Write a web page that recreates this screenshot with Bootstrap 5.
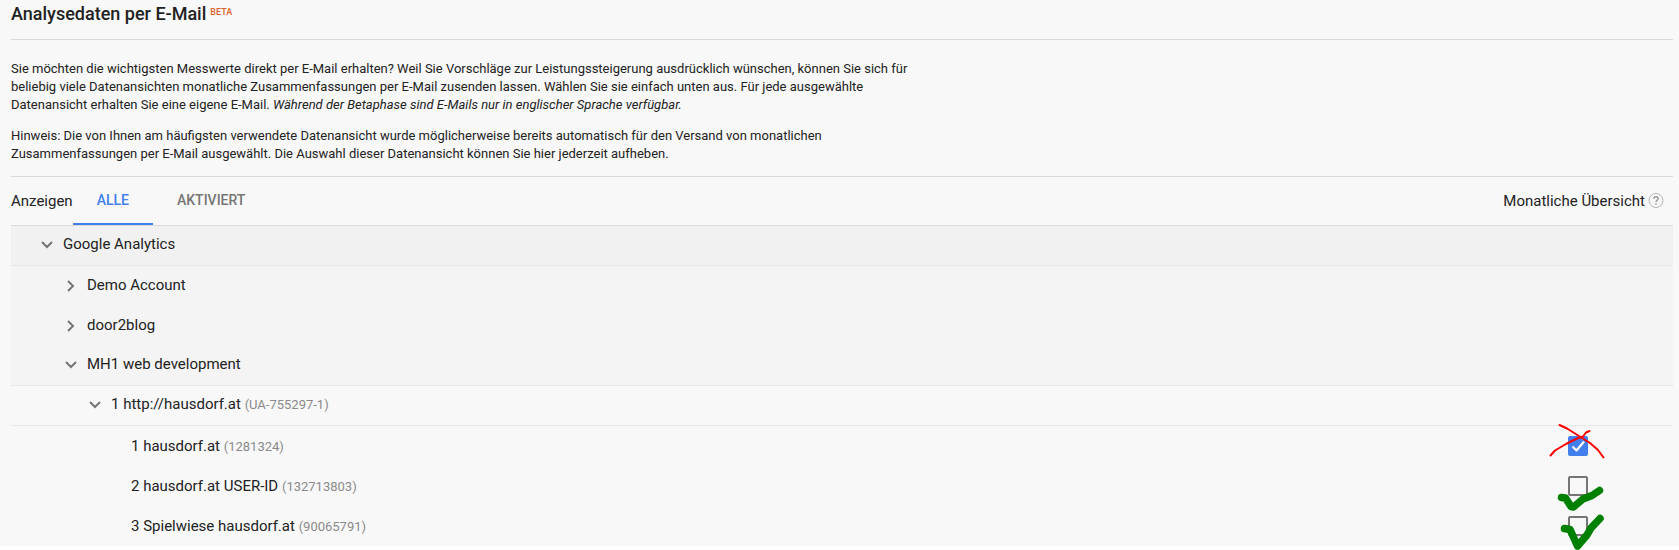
<!DOCTYPE html>
<html lang="de">
<head>
<meta charset="utf-8">
<meta name="viewport" content="width=device-width, initial-scale=1">
<title>Analysedaten per E-Mail</title>
<link href="https://cdn.jsdelivr.net/npm/bootstrap@5.3.0/dist/css/bootstrap.min.css" rel="stylesheet">
<style>
  body { background: #fff; color: #222; font: 15px/20px Roboto, sans-serif; min-height: 100vh; }
  .page { background: #f8f8f8; padding: 0 6px 0 11px; }
  .rule { border-bottom: 1px solid #dadada; }
  .page-title { font-size: 18px; line-height: 28px; font-weight: 500; padding-bottom: 11px; }
  .beta { font-size: 9px; line-height: 12px; font-weight: 500; color: #d9622b; margin-top: 6px; }
  .intro { font-size: 13px; line-height: 18px; padding: 20px 0 13px; }
  .intro p { max-width: 910px; margin-bottom: 13px; }
  .intro p:last-child { margin-bottom: 0; }
  .filter-bar { height: 49px; }
  .tab-btn { border: 0; border-bottom: 2px solid transparent; background: none; padding: 0 24px; color: #757575; font-size: 14px; font-weight: 500; }
  .tab-btn.active { color: #427fed; border-color: #427fed; }
  .tree-row { height: 40px; padding-right: 85px; }
  .tree-group { padding-bottom: 3px; }
  .tree-row.lined { border-bottom: 1px solid #e8e8e8; }
  .bg-root { background: #f1f1f1; }
  .bg-account { background: #f4f4f4; }
  .lvl-0 { padding-left: 30px; }
  .lvl-1 { padding-left: 54px; }
  .lvl-2 { padding-left: 78px; }
  .lvl-3 { padding-left: 120px; }
  .toggle { border: 0; background: none; padding: 0; width: 12px; height: 12px; margin-right: 10px; }
  .entry-id { font-size: 13px; color: #8a8a8a; }
  .help { border: 0; background: none; padding: 0; margin: 0 9px 0 3px; }
  .form-check-input.pick { width: 20px; height: 20px; margin: 0; border: 2px solid #757575; border-radius: 2px; background-color: transparent; }
  .form-check-input.pick:checked { background-color: #427fed; border-color: #427fed; background-image: none; }
  .ink { position: absolute; left: -23px; top: -16px; pointer-events: none; }
</style>
</head>
<body>
<main class="page">
  <header class="rule d-flex align-items-start gap-1">
    <h1 class="page-title m-0">Analysedaten per E-Mail</h1>
    <span class="beta">BETA</span>
  </header>

  <section class="intro rule">
    <p>Sie möchten die wichtigsten Messwerte direkt per E-Mail erhalten? Weil Sie Vorschläge zur Leistungssteigerung ausdrücklich wünschen, können Sie sich für beliebig viele Datenansichten monatliche Zusammenfassungen per E-Mail zusenden lassen. Wählen Sie sie einfach unten aus. Für jede ausgewählte Datenansicht erhalten Sie eine eigene E-Mail. <em>Während der Betaphase sind E-Mails nur in englischer Sprache verfügbar.</em></p>
    <p>Hinweis: Die von Ihnen am häufigsten verwendete Datenansicht wurde möglicherweise bereits automatisch für den Versand von monatlichen Zusammenfassungen per E-Mail ausgewählt. Die Auswahl dieser Datenansicht können Sie hier jederzeit aufheben.</p>
  </section>

  <div class="filter-bar rule d-flex">
    <span class="align-self-center">Anzeigen</span>
    <div class="d-flex" role="tablist">
      <button type="button" class="tab-btn active" role="tab" aria-selected="true">ALLE</button>
      <button type="button" class="tab-btn" role="tab" aria-selected="false">AKTIVIERT</button>
    </div>
    <span class="align-self-center ms-auto">Monatliche Übersicht</span>
    <button type="button" class="help align-self-center d-flex" aria-label="Hilfe">
      <svg width="16" height="16" viewBox="0 0 16 16" fill="none" stroke="#b5b5b5"><circle cx="8" cy="7.500" r="7"/><path d="M5.800 5.800C5.900 3.100 10.200 3.200 10.200 5.700C10.200 7.200 8 7.300 8 9.100M8 10.300V11.700" stroke="#999" stroke-width="1.400"/></svg>
    </button>
  </div>

  <div class="tree-row tree-group lined bg-root lvl-0 d-flex align-items-center">
    <button type="button" class="toggle d-flex" aria-label="Einklappen"><svg width="12" height="12" viewBox="0 0 12 12" fill="none" stroke="#757575" stroke-width="2"><path d="M1 4L6 9L11 4"/></svg></button>
    <span>Google Analytics</span>
  </div>
  <div class="tree-row tree-group bg-account lvl-1 d-flex align-items-center">
    <button type="button" class="toggle d-flex" aria-label="Ausklappen"><svg width="12" height="12" viewBox="0 0 12 12" fill="none" stroke="#757575" stroke-width="2" overflow="visible"><path d="M3 2L8 7L3 12"/></svg></button>
    <span>Demo Account</span>
  </div>
  <div class="tree-row tree-group bg-account lvl-1 d-flex align-items-center">
    <button type="button" class="toggle d-flex" aria-label="Ausklappen"><svg width="12" height="12" viewBox="0 0 12 12" fill="none" stroke="#757575" stroke-width="2" overflow="visible"><path d="M3 2L8 7L3 12"/></svg></button>
    <span>door2blog</span>
  </div>
  <div class="tree-row tree-group lined bg-account lvl-1 d-flex align-items-center">
    <button type="button" class="toggle d-flex" aria-label="Einklappen"><svg width="12" height="12" viewBox="0 0 12 12" fill="none" stroke="#757575" stroke-width="2"><path d="M1 4L6 9L11 4"/></svg></button>
    <span>MH1 web development</span>
  </div>
  <div class="tree-row tree-group lined lvl-2 d-flex align-items-center">
    <button type="button" class="toggle d-flex" aria-label="Einklappen"><svg width="12" height="12" viewBox="0 0 12 12" fill="none" stroke="#757575" stroke-width="2"><path d="M1 4L6 9L11 4"/></svg></button>
    <span>1 http://hausdorf.at <span class="entry-id">(UA-755297-1)</span></span>
  </div>

  <div class="tree-row lvl-3 d-flex align-items-center justify-content-between">
    <label for="v1">1 hausdorf.at <span class="entry-id">(1281324)</span></label>
    <span class="position-relative d-flex">
      <input class="form-check-input pick" type="checkbox" id="v1" checked>
      <svg class="ink" width="70" height="50" viewBox="0 0 70 50" fill="none" stroke-linecap="round" stroke-linejoin="round"><path d="M27.500 26.500L31.500 30.500L39 21.500" stroke="#fff" stroke-width="2.200" stroke-linecap="butt"/><path d="M14.500 5L22 8.500L34 16L45 23L53 30L58.500 37.500M5.500 35.500L10 30.500L21 24L32 18.500L38 16.500L41 12.500L44.500 11" stroke="#f00" stroke-width="2"/></svg>
    </span>
  </div>
  <div class="tree-row lvl-3 d-flex align-items-center justify-content-between">
    <label for="v2">2 hausdorf.at USER-ID <span class="entry-id">(132713803)</span></label>
    <span class="position-relative d-flex">
      <input class="form-check-input pick" type="checkbox" id="v2">
      <svg class="ink" width="70" height="54" viewBox="0 0 70 54" fill="none" stroke="#008000" stroke-width="7.500" stroke-linecap="round" stroke-linejoin="round"><path d="M16.500 37.500L20.500 38L26 46.500L28.500 47L38 39L47 35.500L54.500 30.500"/></svg>
    </span>
  </div>
  <div class="tree-row lvl-3 d-flex align-items-center justify-content-between">
    <label for="v3">3 Spielwiese hausdorf.at <span class="entry-id">(90065791)</span></label>
    <span class="position-relative d-flex">
      <input class="form-check-input pick" type="checkbox" id="v3">
      <svg class="ink" width="70" height="50" viewBox="0 0 70 50" fill="none" stroke="#008000" stroke-width="7.500" stroke-linecap="round" stroke-linejoin="round"><path d="M19.500 28.500L25 29.500L32.500 46L42 35L46 28L55 18.500"/></svg>
    </span>
  </div>
</main>
<script src="https://cdn.jsdelivr.net/npm/bootstrap@5.3.0/dist/js/bootstrap.bundle.min.js"></script>
</body>
</html>
